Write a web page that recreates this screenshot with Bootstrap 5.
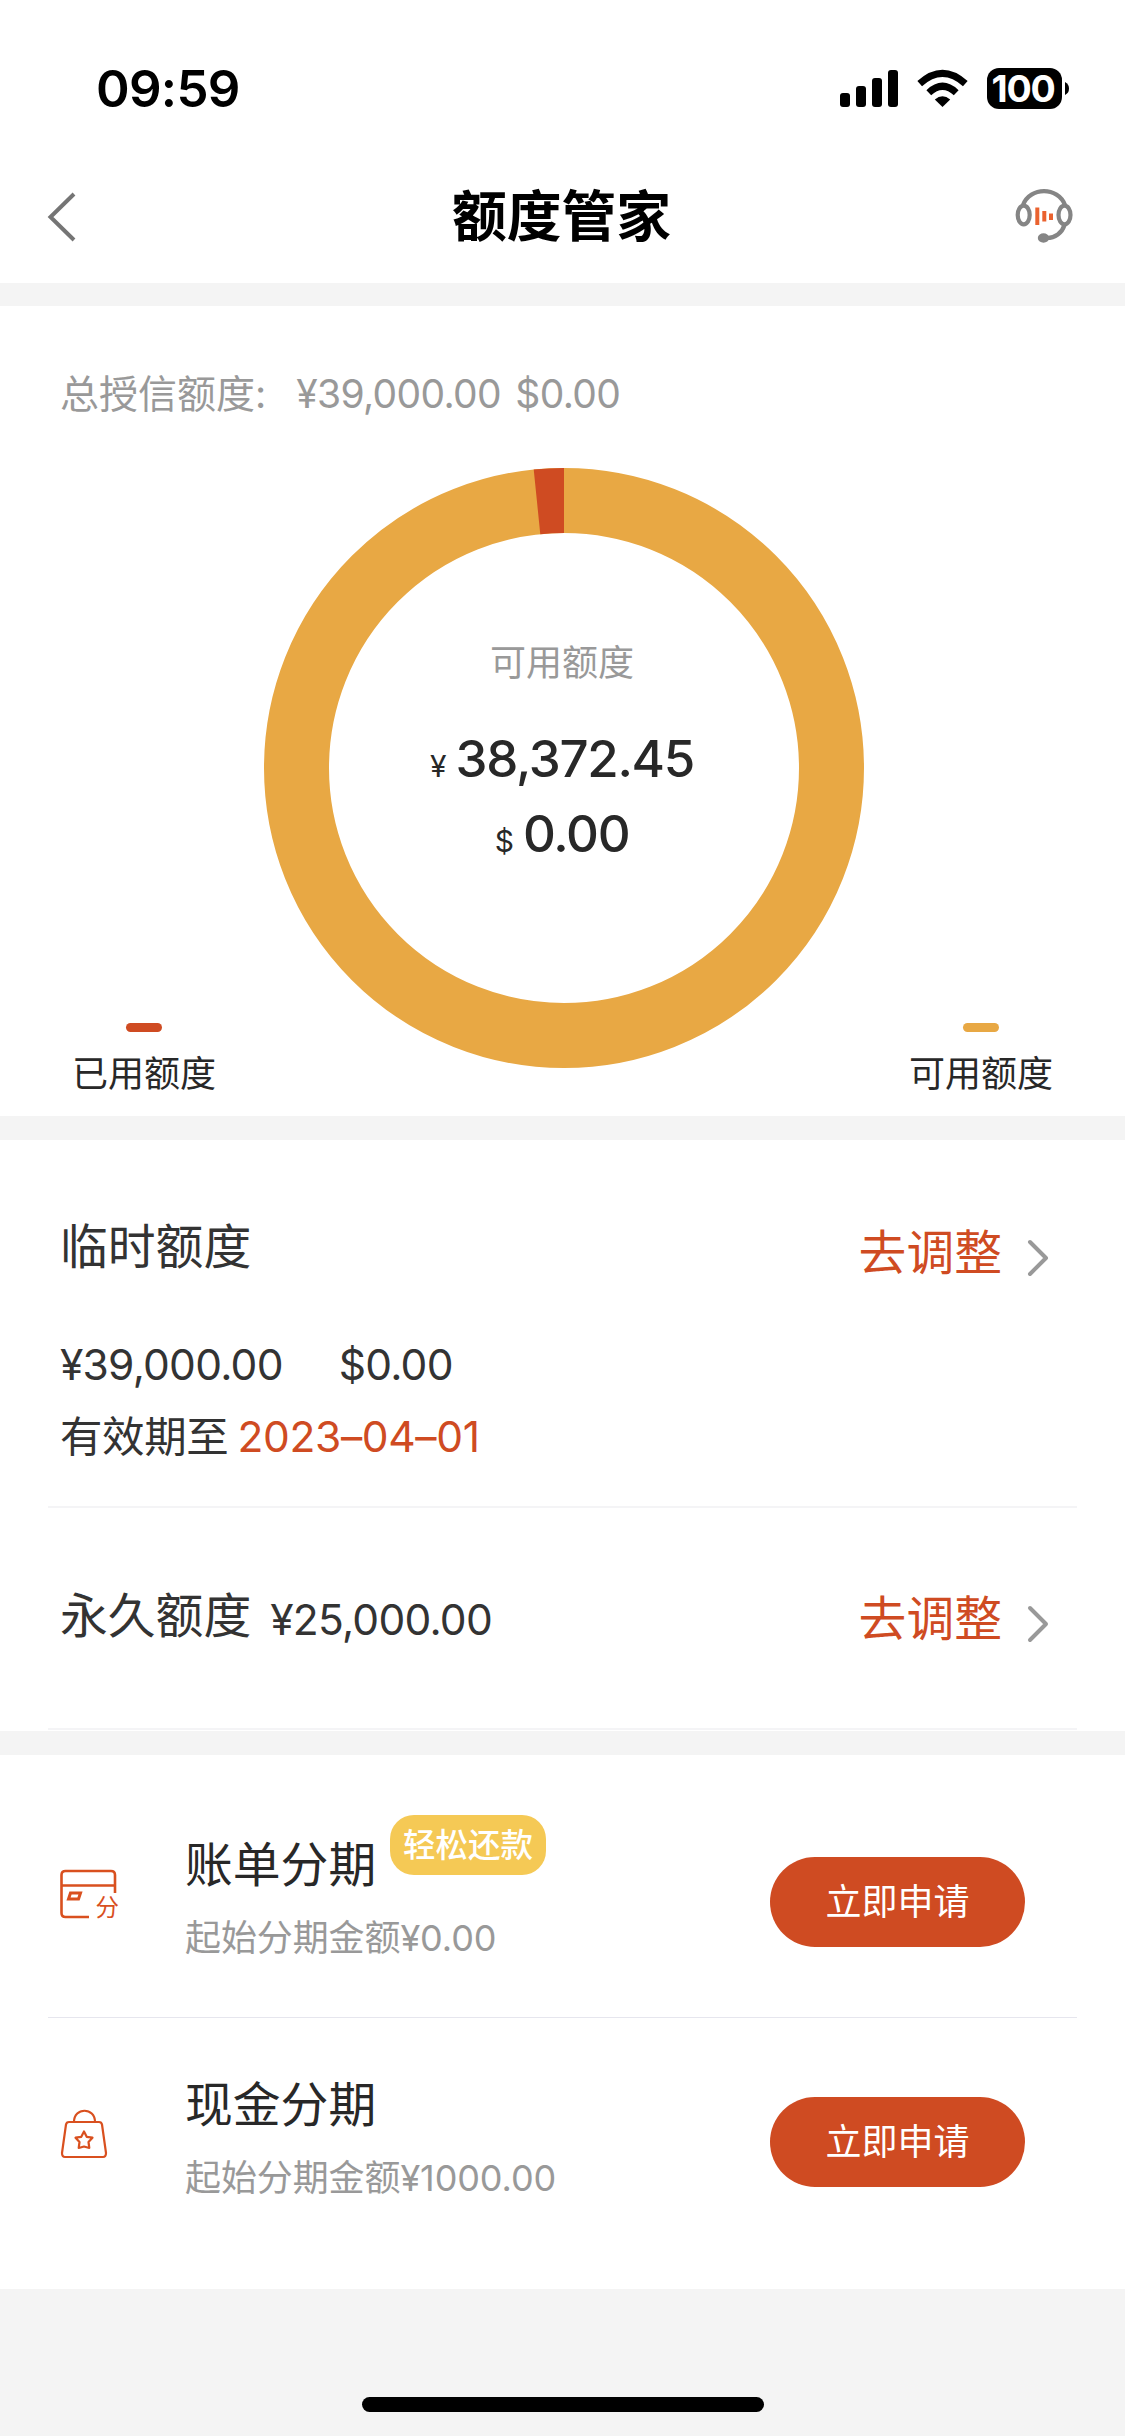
<!DOCTYPE html>
<html lang="zh-CN">
<head>
<meta charset="utf-8">
<meta name="viewport" content="width=device-width, initial-scale=1">
<title>额度管家</title>
<link href="https://cdn.jsdelivr.net/npm/bootstrap@5.3.0/dist/css/bootstrap.min.css" rel="stylesheet">
<style>
  :root { --brand: #cf4b22; --gold: #e8a844; --ink: #333; --dark: #282828; --muted: #999; --gap: #f4f4f4; }
  body { font-family: Inter, "Noto Sans CJK SC", sans-serif; background: var(--gap); color: var(--ink); line-height: 60px; white-space: nowrap; }
  svg { display: block; flex: none; overflow: visible; }
  .screen { width: 1125px; height: 2436px; overflow: hidden; }
  .c-brand { color: var(--brand); }
  .c-muted { color: var(--muted); }
  .c-dark { color: var(--dark); }
  .bg-brand { background: var(--brand); }
  .bg-gold { background: var(--gold); }

  .status { height: 130px; padding: 59px 56px 0 96px; color: #000; }
  .clock { font-size: 51px; font-weight: 600; letter-spacing: -.7px; }
  .signals { margin-top: 9px; }
  .wifi { margin: 0 19px; }
  .battery-pill { width: 75px; height: 41px; border-radius: 12px; background: #000; color: #fff; font-size: 37.5px; font-weight: 700; line-height: 41px; letter-spacing: -1.3px; padding-right: 3px; }
  .topbar { height: 153px; padding: 0 52px 0 48px; }
  .topbar svg { margin-top: 57px; }
  .page-title { font-size: 54.8px; font-weight: 700; color: #000; line-height: 80px; margin: 46px 0 0 2px; }

  .overview { height: 810px; margin-top: 23px; padding-top: 58px; }
  .total-line { font-size: 39px; padding-left: 60px; }
  .num-39 { letter-spacing: -.65px; word-spacing: 4px; margin-left: 30px; }
  .chart-row { display: grid; grid-template-columns: 264px 600px 261px; margin-top: 44px; height: 648px; }
  .ring { width: 600px; height: 600px; }
  .ring-text { inset: 0; padding-top: 165px; padding-right: 4px; }
  .fs36 { font-size: 36px; }
  .figure-line { font-size: 51px; font-weight: 550; letter-spacing: -1.3px; }
  .unit { font-size: 30px; font-weight: 400; margin-right: 9px; letter-spacing: 0; line-height: 1; }
  .legend-item { width: 144px; line-height: 50px; padding-bottom: 17px; }
  .swatch { width: 36px; height: 9px; border-radius: 4.5px; margin-bottom: 17px; }

  .limits { height: 591px; margin-top: 24px; }
  .rule { margin: 0 48px; border-bottom: 2px solid #f4f4f6; }
  .limit-row { padding: 77px 13px 0 12px; }
  .temp-row { height: 368px; }
  .perm-row { height: 222px; }
  .fs48 { font-size: 47.8px; }
  .num-42 { font-size: 42.5px; letter-spacing: -.75px; }
  .until { letter-spacing: -.4px; }
  .date-num { letter-spacing: -.35px; margin-left: 9px; }
  .adjust { gap: 26px; padding-top: 6px; padding-right: 16px; }
  .adjust svg { margin-top: 10px; }

  .plans { height: 534px; margin-top: 24px; }
  .plan { padding-left: 12px; padding-right: 52px; }
  .plan-icon { width: 125px; }
  .plan-note { letter-spacing: -.1px; }
  .pill-btn { width: 255px; height: 90px; background: var(--brand); color: #fff; border: 0; font-size: 36px; line-height: 90px; padding: 0; border-radius: 45px; }
  .tag { width: 156px; height: 60px; border-radius: 24px; background: #f5c955; color: #fff; font-size: 32.5px; font-weight: 500; line-height: 62px; left: 205px; top: -20px; }
  .home-bar { width: 402px; height: 15px; border-radius: 8px; background: #000; margin: 108px 0 0 362px; }
</style>
</head>
<body>
<div class="screen">
  <header class="bg-white">
    <div class="status d-flex justify-content-between align-items-start">
      <div class="clock">09:59</div>
      <div class="signals d-flex">
        <svg width="58" height="41" viewBox="0 0 58 41"><rect y="25" width="10" height="14" rx="3"/><rect x="16" y="18" width="10" height="21" rx="3"/><rect x="32" y="10" width="10" height="29" rx="3"/><rect x="48" y="2" width="10" height="37" rx="3"/></svg>
        <svg class="wifi" width="51" height="41" viewBox="0 0 51 41">
          <path d="M25.500 39 L17.800 31.400 Q25.500 25 33.200 31.400Z"/>
          <path d="M11.800 24.700 Q25.500 11.800 39.200 24.700" fill="none" stroke="#000" stroke-width="7"/>
          <path d="M2.700 15.700 Q25.500 -4.800 48.300 15.700" fill="none" stroke="#000" stroke-width="7"/>
        </svg>
        <div class="battery-pill text-center">100</div>
        <svg width="7" height="41" viewBox="0 0 7 41"><path d="M3 14 Q7 16 7 20.500 T3 27Z"/></svg>
      </div>
    </div>
    <div class="topbar d-flex justify-content-between align-items-start">
      <svg width="60" height="60" viewBox="0 0 60 60"><path d="M26 7 L2.500 30 L26 53" fill="none" stroke="#757575" stroke-width="4"/></svg>
      <h1 class="page-title">额度管家</h1>
      <svg width="60" height="60" viewBox="0 0 60 60" fill="none" stroke="#858585" stroke-width="4.200">
        <ellipse cx="10.700" cy="28" rx="6" ry="9.300"/><ellipse cx="51.500" cy="28" rx="6" ry="9.300"/>
        <path d="M10 18 C17 -.5 45 -.5 52 18M51.500 38 C49 46 42 51 34 51"/>
        <ellipse cx="30.500" cy="51" rx="3.600" ry="2.600" fill="#858585"/>
        <g stroke="#ea622f" stroke-width="4"><path d="M24.300 20.500V38"/><path d="M31.300 24V34.500"/><path d="M38 26.500V33"/></g>
      </svg>
    </div>
  </header>

  <section class="overview bg-white">
    <div class="total-line c-muted d-flex"><span>总授信额度:</span><span class="num-39">¥39,000.00 $0.00</span></div>
    <div class="chart-row">
      <div class="d-flex align-items-end" style="padding-left:72px">
        <div class="legend-item text-center"><div class="swatch bg-brand mx-auto"></div><div class="fs36 c-dark">已用额度</div></div>
      </div>
      <div class="ring position-relative">
        <svg width="600" height="600" viewBox="0 0 600 600" fill="none" stroke-width="65">
          <circle cx="300" cy="300" r="267.500" stroke="#e8a844"/>
          <path d="M273 33.870 A267.500 267.500 0 0 1 300 32.500" stroke="#cf4b22"/>
        </svg>
        <div class="ring-text position-absolute text-center">
          <div class="fs36 c-muted">可用额度</div>
          <div class="figure-line c-dark" style="margin-top:36px"><span class="unit">¥</span>38,372.45</div>
          <div class="figure-line c-dark" style="margin-top:15px"><span class="unit">$</span>0.00</div>
        </div>
      </div>
      <div class="d-flex align-items-end justify-content-end" style="padding-right:72px">
        <div class="legend-item text-center"><div class="swatch bg-gold mx-auto"></div><div class="fs36 c-dark">可用额度</div></div>
      </div>
    </div>
  </section>

  <section class="limits bg-white">
    <div class="rule limit-row temp-row d-flex justify-content-between align-items-start">
      <div>
        <div class="fs48">临时额度</div>
        <div class="num-42" style="margin-top:58px"><span>¥39,000.00</span><span style="margin-left:56px">$0.00</span></div>
        <div class="num-42" style="margin-top:12px"><span class="until">有效期至</span><span class="date-num c-brand">2023–04–01</span></div>
      </div>
      <div class="adjust d-flex align-items-center c-brand fs48">去调整
        <svg width="20" height="36" viewBox="0 0 20 36"><path d="M2 2 L18 18 L2 34" fill="none" stroke="#999" stroke-width="4" stroke-linecap="round" stroke-linejoin="round"/></svg>
      </div>
    </div>
    <div class="rule limit-row perm-row d-flex justify-content-between align-items-start">
      <div class="d-flex"><div class="fs48" style="padding-top:1px">永久额度</div><div class="num-42" style="margin:5px 0 0 19px">¥25,000.00</div></div>
      <div class="adjust d-flex align-items-center c-brand fs48" style="padding-top:4px">去调整
        <svg width="20" height="36" viewBox="0 0 20 36"><path d="M2 2 L18 18 L2 34" fill="none" stroke="#999" stroke-width="4" stroke-linecap="round" stroke-linejoin="round"/></svg>
      </div>
    </div>
  </section>

  <section class="plans bg-white">
    <div class="rule plan d-flex align-items-start" style="height:263px;border-bottom:1px solid #e6e6ee;padding-top:80px">
      <div class="plan-icon">
        <svg width="60" height="50" viewBox="0 0 60 50" style="margin-top:34px" fill="none" stroke="#d9501f" stroke-width="2.600">
          <path d="M55 24 V6 Q55 2 51 2 H5.500 Q1.500 2 1.500 6 V44 Q1.500 48 5.500 48 H29 M1.500 16.500 H55"/>
          <path d="M10.500 24 H20.500 L18.500 30 H8.500Z" stroke-width="3"/>
          <text x="35.500" y="47" font-size="23.500" fill="#d9501f" stroke="none">分</text>
        </svg>
      </div>
      <div class="position-relative flex-grow-1">
        <div class="fs48 c-dark">账单分期</div>
        <span class="tag position-absolute text-center">轻松还款</span>
        <div class="plan-note fs36 c-muted" style="margin-top:13px">起始分期金额¥0.00</div>
      </div>
      <button class="pill-btn" style="margin-top:22px">立即申请</button>
    </div>
    <div class="plan d-flex align-items-start" style="margin:0 48px;padding-top:57px">
      <div class="plan-icon">
        <svg width="50" height="50" viewBox="0 0 50 50" style="margin-top:34px" fill="none" stroke="#d9501f" stroke-width="2.200" stroke-linejoin="round">
          <path d="M14 13 C14 -2 35 -2 35 13M9 13 H39 Q41.500 13 42 15.500 L46 44 Q46 48 43 48 H5 Q2 48 2 44 L6 15.500 Q6.500 13 9 13Z"/>
          <path d="M24 22.500 L26.700 27.800 L32.500 28.700 L28.500 33 L29.300 39 L24 37.500 L18.700 39 L19.500 33 L15.500 28.700 L21.300 27.800Z"/>
        </svg>
      </div>
      <div class="flex-grow-1">
        <div class="fs48 c-dark">现金分期</div>
        <div class="plan-note fs36 c-muted" style="margin-top:13px">起始分期金额¥1000.00</div>
      </div>
      <button class="pill-btn" style="margin-top:22px">立即申请</button>
    </div>
  </section>
  <div class="home-bar"></div>
</div>
<script src="https://cdn.jsdelivr.net/npm/bootstrap@5.3.0/dist/js/bootstrap.bundle.min.js"></script>
</body>
</html>
